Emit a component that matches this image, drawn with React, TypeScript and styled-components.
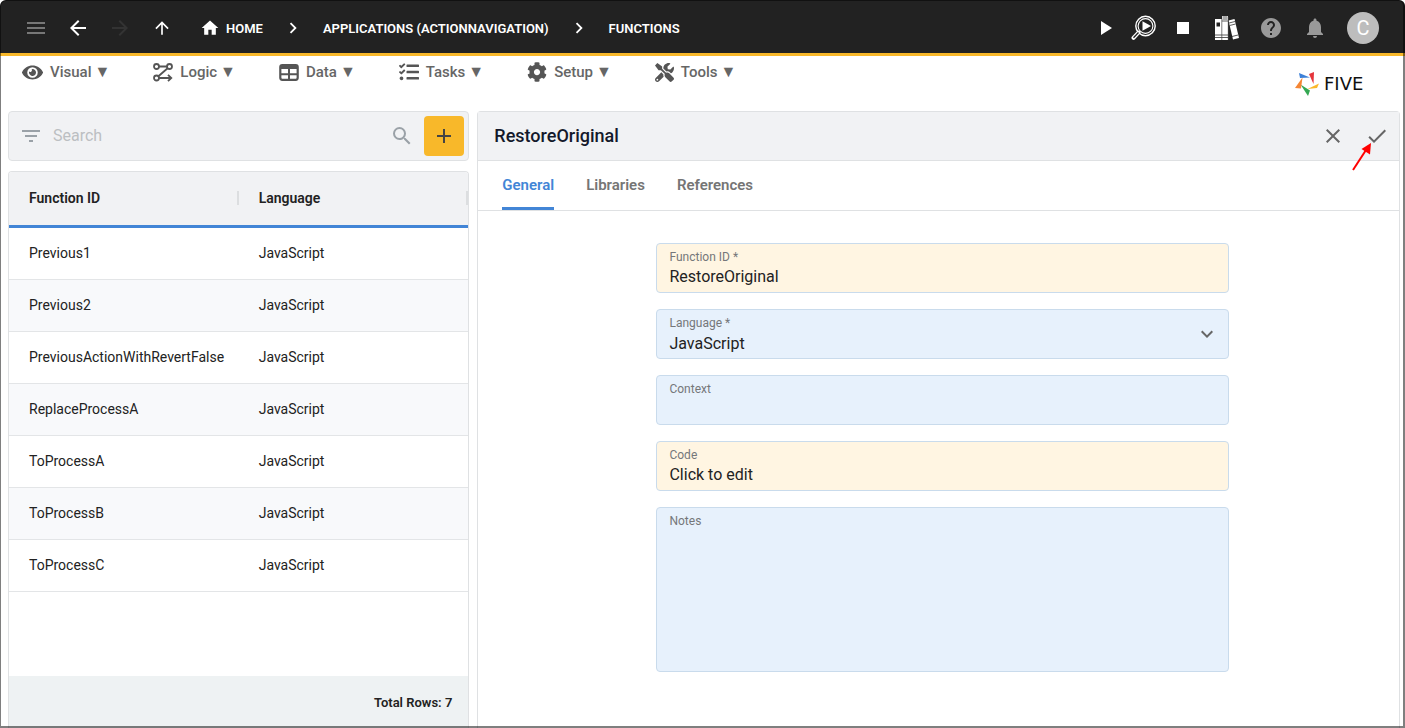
import React from "react";
import styled, { createGlobalStyle, css } from "styled-components";
import {
  MdMenu, MdArrowBack, MdArrowForward, MdArrowUpward, MdHome, MdChevronRight, MdPlayArrow,
  MdStop, MdHelp, MdNotifications, MdFilterList, MdSearch, MdAdd, MdClose,
  MdCheck, MdExpandMore,
} from "react-icons/md";
import { FaEye, FaTasks, FaTools, FaCog } from "react-icons/fa";

const line = "#dfe1e3";
const blue = "#4285d6";
const yellow = "#f8b82a";

const GlobalStyle = createGlobalStyle`
  *, *::before, *::after { box-sizing: border-box; }
  body { margin: 0; background: #fff; font-family: Roboto, "Liberation Sans", sans-serif; color: #222; }
  button, input, textarea, select { font-family: inherit; color: inherit; }
  button { border: 0; padding: 0; background: none; cursor: pointer; }
  svg { display: block; flex: none; }
`;

const Window = styled.div`
  position: relative;
  display: flex;
  flex-direction: column;
  height: 100vh;
  min-height: 700px;
  border-radius: 6px 6px 0 0;
  overflow: hidden;
  &::after {
    content: "";
    position: absolute;
    inset: 0;
    border: solid rgba(0, 0, 0, 0.5);
    border-width: 1px 2px 2px 1px;
    border-radius: 6px 6px 0 0;
    pointer-events: none;
  }
`;

const TopBar = styled.header`
  display: flex;
  align-items: center;
  justify-content: space-between;
  flex: none;
  height: 56px;
  padding: 3px 26px 0 24px;
  background: #222;
  border-bottom: 3px solid ${yellow};
  color: #fff;
`;

const NavGroup = styled.nav`
  display: flex;
  align-items: center;
  gap: 18px;
`;

const IconButton = styled.button<{ $tone?: string }>`
  display: flex;
  align-items: center;
  justify-content: center;
  width: 24px;
  height: 24px;
  color: ${(p) => p.$tone ?? "#fff"};
`;

const Crumbs = styled.div`
  display: flex;
  align-items: center;
  gap: 19px;
  margin-left: 8px;
`;

const Crumb = styled.a`
  display: flex;
  align-items: center;
  gap: 6px;
  color: #fff;
  font-size: 13px;
  font-weight: 600;
  text-decoration: none;
`;

const Actions = styled.div`
  display: flex;
  align-items: center;
  gap: 20px;
`;

const RunControls = styled.div`
  display: flex;
  align-items: center;
  gap: 15px;
`;

const Avatar = styled.button`
  width: 32px;
  height: 32px;
  border-radius: 50%;
  background: #bdbdbd;
  color: #fff;
  font-size: 20px;
`;

const MenuBar = styled.div`
  display: flex;
  justify-content: space-between;
  flex: none;
  height: 55px;
  padding: 0 22px;
`;

const Menus = styled.nav`
  display: flex;
  align-items: center;
  gap: 43px;
  height: 32px;
`;

const MenuButton = styled.button`
  display: flex;
  align-items: center;
  gap: 7px;
  color: #666;
  font-size: 15px;
  font-weight: 500;
  svg { color: #555; }
`;

const Caret = styled.span`
  margin-left: -4px;
  font-size: 16px;
  line-height: 18px;
`;

const Brand = styled.a`
  display: flex;
  align-items: center;
  gap: 4px;
  width: 88px;
  height: 55px;
  color: #111;
  font: 18px "DejaVu Sans", sans-serif;
  text-decoration: none;
`;

const Workspace = styled.main`
  display: grid;
  grid-template-columns: 1fr 2fr;
  gap: 8px;
  flex: 1;
  min-height: 0;
  padding: 0 5px 0 8px;
`;

const ListColumn = styled.section`
  display: flex;
  flex-direction: column;
  gap: 10px;
  min-width: 0;
`;

const SearchBar = styled.div`
  display: flex;
  align-items: center;
  height: 50px;
  padding: 0 4px 0 10px;
  background: #f1f2f4;
  border: 1px solid ${line};
  border-radius: 4px;
`;

const SearchInput = styled.input`
  flex: 1;
  min-width: 0;
  padding: 0 10px 2px;
  border: 0;
  outline: 0;
  background: none;
  font-size: 16px;
  &::placeholder { color: #bcbfc2; opacity: 1; }
`;

const AddButton = styled.button`
  display: flex;
  align-items: center;
  justify-content: center;
  width: 40px;
  height: 40px;
  margin-left: 10px;
  border-radius: 4px;
  background: ${yellow};
  color: #444;
`;

const GridPanel = styled.div`
  display: flex;
  flex-direction: column;
  flex: 1;
  border: 1px solid ${line};
  border-bottom: 0;
  border-radius: 4px 4px 0 0;
  overflow: hidden;
`;

const Table = styled.table`
  width: 100%;
  border-collapse: separate;
  border-spacing: 0;
  table-layout: fixed;
  font-size: 14px;
  text-align: left;
`;

const HeadCell = styled.th`
  height: 56px;
  padding: 0 0 2px;
  background: #f1f2f4;
  border-bottom: 3px solid ${blue};
  font-weight: 600;
`;

const HeadLabel = styled.span`
  display: block;
  padding-left: 20px;
  border-right: 2px solid #dcdee0;
  line-height: 14px;
`;

const Cell = styled.td`
  height: 52px;
  padding: 0 0 2px 20px;
  border-bottom: 1px solid #e3e5e7;
  tr:nth-child(even) & { background: #f8f9fb; }
`;

const GridFooter = styled.div`
  display: flex;
  align-items: center;
  justify-content: flex-end;
  height: 52px;
  margin-top: auto;
  padding-right: 16px;
  background: #eef2f3;
  font-size: 13px;
  font-weight: 600;
`;

const DetailPanel = styled.section`
  display: flex;
  flex-direction: column;
  min-width: 0;
  border: 1px solid ${line};
  border-bottom: 0;
  border-radius: 4px 4px 0 0;
`;

const DetailHeader = styled.header`
  display: flex;
  align-items: center;
  justify-content: space-between;
  height: 49px;
  padding: 0 10px 0 16px;
  background: #f1f2f4;
  border-bottom: 1px solid ${line};
`;

const Title = styled.h1`
  margin: 0;
  padding-bottom: 2px;
  color: #14192b;
  font-size: 18px;
  font-weight: 500;
`;

const DetailActions = styled.div`
  position: relative;
  display: flex;
  gap: 20px;
`;

const Pointer = styled.svg`
  position: absolute;
  right: 16px;
  top: 18px;
  pointer-events: none;
`;

const Tabs = styled.div`
  display: flex;
  gap: 32px;
  height: 50px;
  padding-left: 24px;
  border-bottom: 1px solid ${line};
`;

const Tab = styled.button<{ $active?: boolean }>`
  height: 49px;
  padding-bottom: 2px;
  border-top: 3px solid transparent;
  color: #757575;
  font-size: 15px;
  font-weight: 600;
  border-bottom: 3px solid transparent;
  ${(p) => p.$active && css`
    color: ${blue};
    border-bottom-color: ${blue};
  `}
`;

const Form = styled.form`
  display: flex;
  flex-direction: column;
  align-items: center;
  gap: 16px;
  padding: 32px 16px 0 24px;
`;

const Field = styled.div<{ $warm?: boolean; $tall?: boolean }>`
  position: relative;
  display: flex;
  flex-direction: column;
  width: 65%;
  height: ${(p) => (p.$tall ? 165 : 50)}px;
  padding: 6px 12px 0;
  background: ${(p) => (p.$warm ? "#fff5e2" : "#e7f1fc")};
  border: 1px solid #c9dbec;
  border-radius: 4px;
  svg { position: absolute; right: 9px; top: 12px; color: #666; pointer-events: none; }
`;

const Label = styled.label`
  color: #75777a;
  font-size: 12px;
  line-height: 14px;
`;

const control = css`
  width: 100%;
  height: 24px;
  margin: 0;
  padding: 0;
  border: 0;
  outline: 0;
  background: none;
  font-size: 16px;
  color: #222;
`;
const Input = styled.input`${control}`;
const Select = styled.select`${control} height: 26px; appearance: none;`;
const TextArea = styled.textarea`${control} flex: 1; resize: none;`;

const LogicIcon = () => (
  <svg width="20" height="20" viewBox="0 0 20 20" fill="none" stroke="currentColor" strokeWidth="1.8">
    <circle cx="3.5" cy="4.5" r="2.5" />
    <circle cx="16.5" cy="4.5" r="2.5" />
    <circle cx="3.5" cy="16" r="2.5" />
    <path d="M6 4.500H14M14.600 6.300 5.400 14.200M6 16H18M15 12.800 18.300 16 15 19.200" />
  </svg>
);

const DataIcon = () => (
  <svg width="20" height="20" viewBox="0 0 20 20" fill="none" stroke="currentColor">
    <rect x="1.300" y="3" width="17.400" height="14.800" rx="2" strokeWidth="2.200" />
    <path d="M1 5h18" strokeWidth="4" />
    <path d="M10 6v12M1 12.300h18" strokeWidth="2" />
  </svg>
);

const TestRunIcon = () => (
  <svg width="26" height="26" viewBox="0 0 26 26" fill="none" stroke="currentColor">
    <circle cx="14.500" cy="11" r="9.700" strokeWidth="1.400" />
    <circle cx="14.500" cy="11" r="7.400" strokeWidth="1.100" />
    <path d="M7.500 17.500 2.500 22.800" strokeWidth="4" strokeLinecap="round" />
    <path d="M7.500 17.500 2.500 22.800" stroke="#222" strokeWidth="1.300" />
    <path d="M11.500 6.300v9.400l8.500-4.700z" fill="currentColor" stroke="none" />
  </svg>
);

const BooksIcon = () => (
  <svg width="26" height="26" viewBox="0 0 26 26" fill="currentColor">
    <path d="M1 4h7v21H1z" />
    <path d="M8 1h6v24H8z" />
    <path d="M8.500 1h5v4h-5z" fill="#aaa" />
    <path d="m14.500 5.500 6-1.500 4.500 19-6 1.500z" />
    <path d="M2.500 7.500h3.500v4H2.500z" fill="#222" />
    <path d="M1 20h13M1 22.500h13M8 6h6M15 8l6-1.500M15.600 10.500l6-1.500M18 21.500l6-1.500" stroke="#333" strokeWidth="0.800" />
    <path d="M7.800 4v21M14.300 2v23" stroke="#444" strokeWidth="0.700" />
  </svg>
);

const StarLogo = () => (
  <svg width="25" height="26" viewBox="0 0 25 26">
    <path d="M4 2 15 6.500 5 7z" fill="#3c80d8" />
    <path d="M19 1 18.500 13 14 3z" fill="#e5353c" />
    <path d="M24 12.500 12.500 18 22 17z" fill="#fbb829" />
    <path d="M5.500 13.500 13 25 15 19.500z" fill="#34a853" />
    <path d="M7.500 6.500 0 17 6 17.500z" fill="#f58634" />
  </svg>
);

const menus = [
  { name: "Visual", icon: <FaEye size={21} /> },
  { name: "Logic", icon: <LogicIcon /> },
  { name: "Data", icon: <DataIcon /> },
  { name: "Tasks", icon: <FaTasks size={20} /> },
  { name: "Setup", icon: <FaCog size={20} /> },
  { name: "Tools", icon: <FaTools size={19} /> },
];

const functions = [
  "Previous1", "Previous2", "PreviousActionWithRevertFalse", "ReplaceProcessA",
  "ToProcessA", "ToProcessB", "ToProcessC",
];

export default function App() {
  return (
    <Window>
      <GlobalStyle />
      <TopBar>
        <NavGroup>
          <IconButton aria-label="Menu" $tone="#777"><MdMenu size={24} /></IconButton>
          <IconButton aria-label="Back"><MdArrowBack size={24} /></IconButton>
          <IconButton aria-label="Forward" $tone="#333"><MdArrowForward size={24} /></IconButton>
          <IconButton aria-label="Up"><MdArrowUpward size={20} /></IconButton>
          <Crumbs>
            <Crumb href="#home"><MdHome size={20} />HOME</Crumb>
            <MdChevronRight size={22} />
            <Crumb href="#applications">APPLICATIONS (ACTIONNAVIGATION)</Crumb>
            <MdChevronRight size={22} />
            <Crumb href="#functions">FUNCTIONS</Crumb>
          </Crumbs>
        </NavGroup>
        <Actions>
          <RunControls>
            <IconButton aria-label="Run"><MdPlayArrow size={24} /></IconButton>
            <IconButton aria-label="Test run"><TestRunIcon /></IconButton>
            <IconButton aria-label="Stop"><MdStop size={24} /></IconButton>
          </RunControls>
          <IconButton aria-label="Library"><BooksIcon /></IconButton>
          <IconButton aria-label="Help" $tone="#999"><MdHelp size={24} /></IconButton>
          <IconButton aria-label="Notifications" $tone="#999"><MdNotifications size={24} /></IconButton>
          <Avatar>C</Avatar>
        </Actions>
      </TopBar>
      <MenuBar>
        <Menus>
          {menus.map((m) => (
            <MenuButton key={m.name}>{m.icon}<span>{m.name}</span><Caret>▼</Caret></MenuButton>
          ))}
        </Menus>
        <Brand href="#five"><StarLogo />FIVE</Brand>
      </MenuBar>
      <Workspace>
        <ListColumn>
          <SearchBar>
            <IconButton aria-label="Filter" $tone="#9aa1a7"><MdFilterList size={24} /></IconButton>
            <SearchInput aria-label="Search" placeholder="Search" />
            <IconButton aria-label="Search" $tone="#9aa1a7"><MdSearch size={24} /></IconButton>
            <AddButton aria-label="Add"><MdAdd size={24} /></AddButton>
          </SearchBar>
          <GridPanel>
            <Table>
              <thead>
                <tr>
                  <HeadCell><HeadLabel>Function ID</HeadLabel></HeadCell>
                  <HeadCell><HeadLabel>Language</HeadLabel></HeadCell>
                </tr>
              </thead>
              <tbody>
                {functions.map((f) => (
                  <tr key={f}><Cell>{f}</Cell><Cell>JavaScript</Cell></tr>
                ))}
              </tbody>
            </Table>
            <GridFooter>Total Rows: 7</GridFooter>
          </GridPanel>
        </ListColumn>
        <DetailPanel>
          <DetailHeader>
            <Title>RestoreOriginal</Title>
            <DetailActions>
              <IconButton aria-label="Close" $tone="#666"><MdClose size={24} /></IconButton>
              <IconButton aria-label="Save" $tone="#666"><MdCheck size={24} /></IconButton>
              <Pointer width="22" height="30" viewBox="0 0 22 30">
                <path d="M2 28 15 8" stroke="#f00" strokeWidth="2" />
                <path d="M20 1 10.500 7 19 12.500z" fill="#f00" />
              </Pointer>
            </DetailActions>
          </DetailHeader>
          <Tabs role="tablist">
            <Tab role="tab" aria-selected $active>General</Tab>
            <Tab role="tab">Libraries</Tab>
            <Tab role="tab">References</Tab>
          </Tabs>
          <Form>
            <Field $warm>
              <Label htmlFor="fid">Function ID *</Label>
              <Input id="fid" defaultValue="RestoreOriginal" />
            </Field>
            <Field>
              <Label htmlFor="language">Language *</Label>
              <Select id="language"><option>JavaScript</option></Select>
              <MdExpandMore size={24} />
            </Field>
            <Field>
              <Label htmlFor="context">Context</Label>
              <Input id="context" />
            </Field>
            <Field $warm>
              <Label htmlFor="code">Code</Label>
              <Input id="code" defaultValue="Click to edit" readOnly />
            </Field>
            <Field $tall>
              <Label htmlFor="notes">Notes</Label>
              <TextArea id="notes" />
            </Field>
          </Form>
        </DetailPanel>
      </Workspace>
    </Window>
  );
}
